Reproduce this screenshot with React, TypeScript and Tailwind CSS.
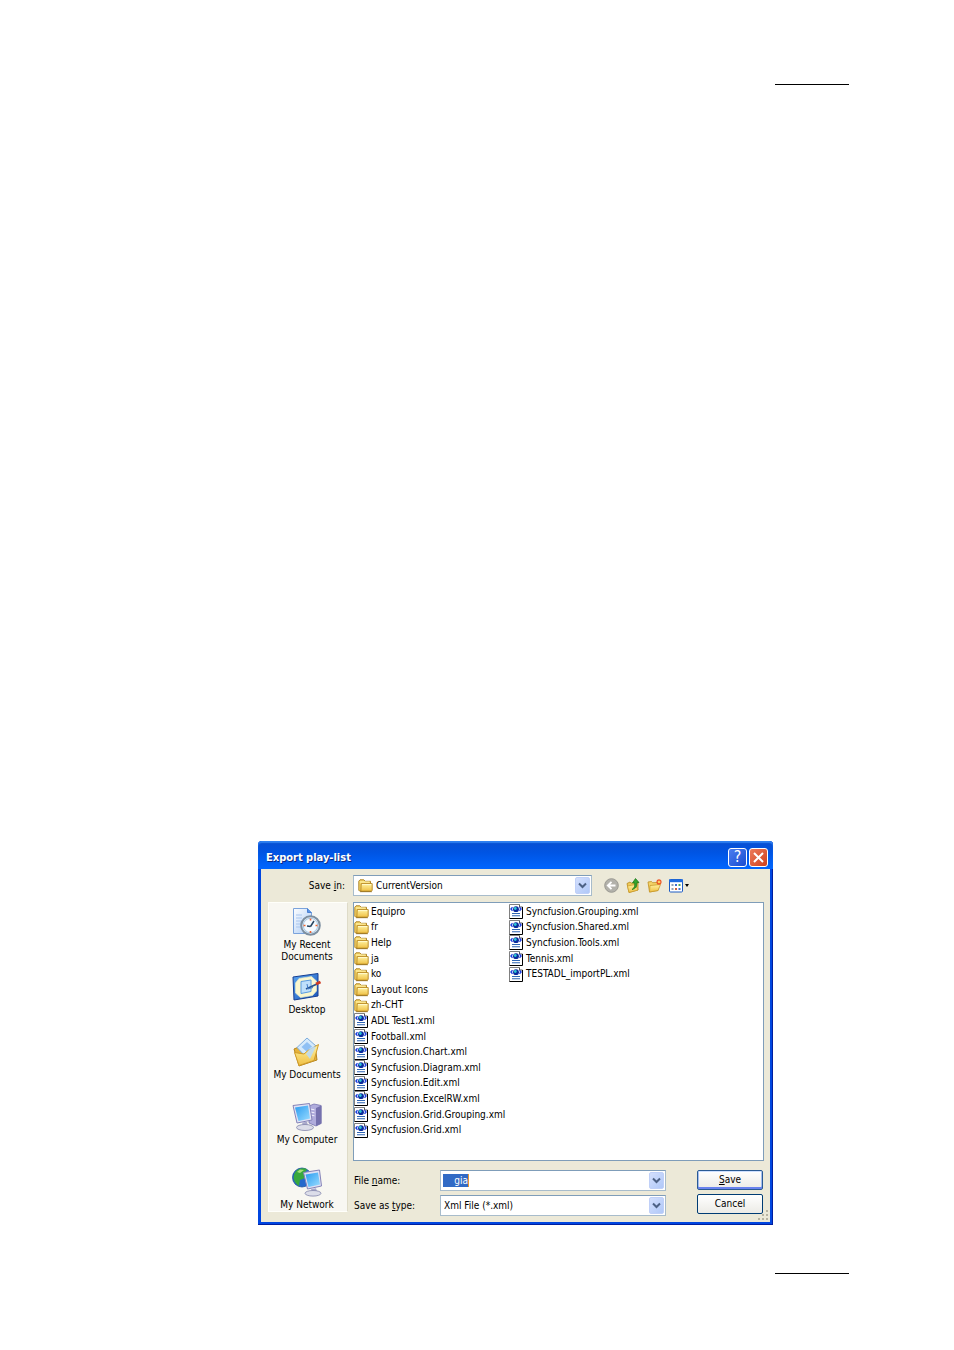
import type { ReactNode } from "react";

const FILES = [
  { name: "Equipro", type: "folder" },
  { name: "fr", type: "folder" },
  { name: "Help", type: "folder" },
  { name: "ja", type: "folder" },
  { name: "ko", type: "folder" },
  { name: "Layout Icons", type: "folder" },
  { name: "zh-CHT", type: "folder" },
  { name: "ADL Test1.xml", type: "xml" },
  { name: "Football.xml", type: "xml" },
  { name: "Syncfusion.Chart.xml", type: "xml" },
  { name: "Syncfusion.Diagram.xml", type: "xml" },
  { name: "Syncfusion.Edit.xml", type: "xml" },
  { name: "Syncfusion.ExcelRW.xml", type: "xml" },
  { name: "Syncfusion.Grid.Grouping.xml", type: "xml" },
  { name: "Syncfusion.Grid.xml", type: "xml" },
  { name: "Syncfusion.Grouping.xml", type: "xml" },
  { name: "Syncfusion.Shared.xml", type: "xml" },
  { name: "Syncfusion.Tools.xml", type: "xml" },
  { name: "Tennis.xml", type: "xml" },
  { name: "TESTADL_importPL.xml", type: "xml" },
];

const FolderIcon = () => (
  <svg width="15" height="15" viewBox="0 0 15 15" className="shrink-0">
    <path d="M.8 3.2 2 1.800h3.800L7.200 3.300h5.300V13H1.500l-.7-.8z" fill="#f6d768" stroke="#a87c1c" strokeWidth=".9" />
    <path d="M1.800 4h9.800" stroke="#fff3b0" />
    <path d="M3.200 5.600h11v6.600l-.8 1H2.800z" fill="url(#folder)" stroke="#b5851f" strokeWidth=".9" />
    <path d="M4 6.600h9.300" stroke="#fffbd0" />
    <path d="M2 13.700h12" stroke="#8a6614" strokeWidth=".7" />
  </svg>
);

const XmlIcon = () => (
  <svg width="15" height="15" viewBox="0 0 15 15" className="shrink-0">
    <path d="M.5.5h10l3 3v11H.5z" fill="#fff" />
    <path d="M.5 14.500V.5h10" fill="none" stroke="#808080" />
    <path d="M10.500.5v2.500h3" fill="none" stroke="#555" />
    <path d="M13.500 3v11.500H.5" fill="none" stroke="#000" />
    <path d="M3.500 3.200 1.900 5l1.600 1.800M10.500 3.200 12.100 5l-1.600 1.800" fill="none" stroke="#1a3ce0" strokeWidth="1.300" />
    <circle cx="7" cy="5.200" r="2.900" fill="#0a2a9c" />
    <circle cx="6.300" cy="4.500" r="1.400" fill="#2cc8d4" />
    <path d="M3 9.500h8M3 11.700h8" stroke="#2f66b4" strokeWidth="1.100" />
  </svg>
);

const RecentIcon = () => (
  <svg width="30" height="30" viewBox="0 0 30 30">
    <path d="M1.500 1.500h14l4 4v21h-18z" fill="url(#paper)" stroke="#7ba3dc" />
    <path d="M15.500 1.500v4h4" fill="#5b94e8" stroke="#4a80d0" />
    <path d="M4 8h6M4 11h6M4 14h6M4 17h5M4 20h5" stroke="#a9c6ee" />
    <circle cx="18.500" cy="18.500" r="9.300" fill="#e4eef6" stroke="#7d8fa0" strokeWidth="2" />
    <circle cx="18.500" cy="18.500" r="7.200" fill="#f5faff" stroke="#a4c6e4" />
    <path d="M18.500 19.500 22 14M18.500 19.500 15 19" stroke="#26435f" strokeWidth="1.500" />
    <path d="M18.500 11.500v2M18.500 24v2M11.500 18.500h2M23.500 18.500h2" stroke="#f0642d" strokeWidth="1.600" />
  </svg>
);

const DesktopIcon = () => (
  <svg width="30" height="30" viewBox="0 0 30 30">
    <path d="M1 5 26 1.500V24L2 28z" fill="url(#screen)" stroke="#173f92" />
    <path d="m7 6.500 12.500-2 5 4.500v10l-4 4.500-12 2L3.500 21V11z" fill="#fbf7cf" stroke="#dfe6c8" strokeWidth=".7" />
    <path d="m9 9.500 10-1.500v11.500L9 21.500z" fill="#bfe0fb" stroke="#5a9ce0" />
    <path d="m14 17 11-5" stroke="#28538e" strokeWidth="1.800" />
    <path d="m15 12 1 5 5-1.500" fill="none" stroke="#3f7cc8" />
    <path d="m24 12 4.500-2" stroke="#cf3a22" strokeWidth="3" />
  </svg>
);

const DocumentsIcon = () => (
  <svg width="30" height="30" viewBox="0 0 30 30">
    <path d="M2 12 8 9.500l3 2L23 8l2 15-18 6z" fill="#e6b23a" stroke="#b78620" />
    <path d="m5 10.500 10-9.500 9.500 8.500L16 22z" fill="#d5eafc" stroke="#7dadde" />
    <path d="m9.500 10 5.500-5 5 4.500-5.500 5z" fill="#8fc0f4" />
    <path d="M2.500 15.500 12 17l4-3.500 10.500-6-4.500 16L7 28.500z" fill="url(#folder)" stroke="#d09c2a" />
    <path d="m14 17 5-7 5-.5-6 12.500z" fill="#b9dafb" opacity=".85" />
  </svg>
);

const ComputerIcon = () => (
  <svg width="30" height="30" viewBox="0 0 30 30">
    <path d="m17 4 5-2 7 1.500v18L24 24l-7-3z" fill="#b0acdc" stroke="#7773b0" strokeWidth=".8" />
    <path d="m24 6 5.500-2.500v18L24 24z" fill="#7571ae" />
    <path d="m18.500 7 4 .8M18.500 10l4 .8M18.500 13l4 .8" stroke="#f0effc" />
    <path d="m1 3.500 16.500-2L20 18 5 21z" fill="#dfe1f4" stroke="#8583b8" />
    <path d="m3 5.500 13-2 2 13L6.500 19z" fill="url(#lcd)" />
    <path d="m10 20.500 5-.8 1 4.300h-5z" fill="#a9a9cb" />
    <ellipse cx="13" cy="25.500" rx="8.500" ry="3" fill="#dcdde9" stroke="#8385ac" strokeWidth=".8" />
  </svg>
);

const NetworkIcon = () => (
  <svg width="30" height="30" viewBox="0 0 30 30">
    <circle cx="10" cy="10.500" r="9.500" fill="#2468cc" stroke="#1d4f9d" strokeWidth=".8" />
    <path d="M4 4c4-3.500 9-3 11-1.500l-3 4.500 1 4-5 2-1 6C1 15 0 9 4 4z" fill="#38a83e" />
    <path d="m5 5 3-2.500 4 .5-4 3z" fill="#a4e078" />
    <path d="m11.500 5.500 16-2.500L29.500 19l-14 3z" fill="#dfe1f4" stroke="#8583b8" />
    <path d="m13.500 7.500 12.500-2L28 17.500 16.500 20z" fill="url(#lcd)" />
    <path d="m19 22 5-.8 1 3.300h-5z" fill="#a9a9cb" />
    <ellipse cx="21" cy="26.300" rx="8" ry="2.800" fill="#dcdde9" stroke="#8385ac" strokeWidth=".8" />
  </svg>
);

const PLACES = [
  { label: "My Recent Documents", icon: <RecentIcon /> },
  { label: "Desktop", icon: <DesktopIcon /> },
  { label: "My Documents", icon: <DocumentsIcon /> },
  { label: "My Computer", icon: <ComputerIcon /> },
  { label: "My Network", icon: <NetworkIcon /> },
];

// Gradients shared by all the icons
const Gradients = () => (
  <svg width="0" height="0" className="absolute" aria-hidden="true">
    <defs>
      <linearGradient id="folder" x1="0" y1="0" x2="0" y2="1">
        <stop offset="0" stopColor="#fff2a0" />
        <stop offset="1" stopColor="#efc045" />
      </linearGradient>
      <linearGradient id="paper" x1="0" y1="0" x2="1" y2="1">
        <stop offset="0" stopColor="#fdfeff" />
        <stop offset="1" stopColor="#a9caf5" />
      </linearGradient>
      <linearGradient id="screen" x1="0" y1="0" x2="1" y2="1">
        <stop offset="0" stopColor="#5aa4f0" />
        <stop offset="1" stopColor="#1b56ba" />
      </linearGradient>
      <linearGradient id="lcd" x1="0" y1="0" x2="1" y2="1">
        <stop offset="0" stopColor="#2a9cf0" />
        <stop offset="1" stopColor="#9adcff" />
      </linearGradient>
    </defs>
  </svg>
);

const Chevron = () => (
  <svg width="9" height="7" viewBox="0 0 9 7">
    <path d="m1 1.500 3.500 3.500L8 1.500" fill="none" stroke="#4d6185" strokeWidth="2" />
  </svg>
);

const ARROW_BOX =
  "flex w-[15px] items-center justify-center rounded-xs border border-[#c0d0f8] bg-linear-to-br from-[#d3dffd] to-[#b0c8f8]";

interface DropDownProps {
  id: string;
  value: string;
  icon?: ReactNode;
}

const DropDown = ({ id, value, icon }: DropDownProps) => (
  <div className="relative flex h-[21px] min-w-0 flex-1 items-center border border-[#a8bccb] border-t-[#7f9db9] bg-white">
    {icon && <span className="pl-1">{icon}</span>}
    <select
      id={id}
      className="h-full min-w-0 flex-1 appearance-none bg-transparent pl-[3px] outline-none"
    >
      <option>{value}</option>
    </select>
    <span className={`pointer-events-none absolute inset-y-px right-px ${ARROW_BOX}`}>
      <Chevron />
    </span>
  </div>
);

const TitleBar = () => (
  <header className="flex h-7 items-center justify-between rounded-t-sm bg-linear-to-b from-[#0a4fd0] via-[#0054e3] via-40% to-[#0066ff] pr-[5px] pl-2 shadow-[inset_0_2px_1px_#2f80f0]">
    <h1 className="pt-[5px] text-[11px] leading-4 font-bold text-white [text-shadow:1px_1px_#0a2a84]">
      Export play-list
    </h1>
    <div className="flex gap-[2px] pt-1">
      <button
        aria-label="Help"
        className="flex size-[19px] items-center justify-center rounded-[3px] border border-white bg-linear-to-br from-[#4a7df0] to-[#1a4bd0] text-[16px] leading-4 text-white"
      >
        ?
      </button>
      <button
        aria-label="Close"
        className="flex size-[19px] items-center justify-center rounded-[3px] border border-white bg-linear-to-br from-[#ec7a5a] to-[#d0401a]"
      >
        <svg width="11" height="11" viewBox="0 0 11 11">
          <path d="m1 1 9 9M10 1l-9 9" stroke="#fff" strokeWidth="2" />
        </svg>
      </button>
    </div>
  </header>
);

const Toolbar = () => (
  <div className="flex w-[172px] items-center pl-3">
    <button aria-label="Back" className="w-[22px]">
      <svg width="15" height="15" viewBox="0 0 15 15">
        <circle cx="7.500" cy="7.500" r="6.800" fill="#b2b1aa" stroke="#9a9992" />
        <path d="M11.500 7.500H4M7.500 3.800 3.800 7.500l3.700 3.700" fill="none" stroke="#fff" strokeWidth="1.800" />
      </svg>
    </button>
    <button aria-label="Up one level" className="w-[21px]">
      <svg width="14" height="15" viewBox="0 0 14 15">
        <path d="M1 5.500 4 4l1 1.200L12 4v8l-9 2.500z" fill="#eec95a" stroke="#b98a1c" strokeWidth=".8" />
        <path d="m1.500 8 8-1.500L12 12l-9 2.500z" fill="url(#folder)" stroke="#c99a2c" strokeWidth=".7" />
        <path d="M6 11.500C8.500 10 9 8 8.700 5H6.500l3-4.500L13 4.500l-2.200.3c.2 3.500-.8 6-4.800 6.700z" fill="#35a52f" stroke="#147414" strokeWidth=".7" />
      </svg>
    </button>
    <button aria-label="New folder" className="w-[22px]">
      <svg width="16" height="15" viewBox="0 0 16 15">
        <path d="M1 4 4.500 3.500l1 1.200L11 4.500v8L2.500 14z" fill="#f3d368" stroke="#c08f22" strokeWidth=".8" />
        <path d="m3 7.500 10.500-1-2.500 6-8.500 1.500z" fill="url(#folder)" stroke="#c99a2c" strokeWidth=".8" />
        <path d="M12 1v6M9 4h6M10 2l4 4M14 2l-4 4" stroke="#ee5524" strokeWidth="1.200" />
        <circle cx="12" cy="4" r="1.200" fill="#ffd35c" />
      </svg>
    </button>
    <button aria-label="View menu" className="flex items-center gap-[2px]">
      <svg width="14" height="14" viewBox="0 0 14 14">
        <rect x=".5" y=".5" width="13" height="12.500" rx="1" fill="#fff" stroke="#1d5cc4" />
        <path d="M0 1.800h14" stroke="#1d6be0" strokeWidth="2.800" />
        <path d="M2.500 6h2M2.500 10h2" stroke="#8ea0b4" strokeWidth="2" />
        <path d="M6 6h2M9.500 10h2" stroke="#3c6fd0" strokeWidth="2" />
        <path d="M9.500 6h2" stroke="#4ca852" strokeWidth="2" />
        <path d="M6 10h2" stroke="#d0603c" strokeWidth="2" />
      </svg>
      <svg width="4" height="3" viewBox="0 0 4 3">
        <path d="M0 0h4L2 3z" fill="#000" />
      </svg>
    </button>
  </div>
);

const Places = () => (
  <nav className="w-[80px] shrink-0 self-start border border-[#fffffa] border-r-[#dedbc8] bg-[#f8f7f2]">
    {PLACES.map((place) => (
      <a
        key={place.label}
        href="#"
        className="flex h-[65px] flex-col items-center gap-[2px] pt-1 pr-[2px] text-center leading-3 last:h-auto"
      >
        {place.icon}
        <span className={place.label === "My Recent Documents" ? "w-16" : "whitespace-nowrap"}>
          {place.label}
        </span>
      </a>
    ))}
  </nav>
);

const FileList = () => (
  <div className="h-[259px] border border-[#7f9db9] bg-white pt-px">
    <ul className="grid h-[234px] auto-cols-[155px] grid-flow-col grid-rows-[repeat(15,minmax(0,1fr))]">
      {FILES.map((file) => (
        <li key={file.name} className="flex items-center gap-[2px] whitespace-nowrap">
          {file.type === "folder" ? <FolderIcon /> : <XmlIcon />}
          {file.name}
        </li>
      ))}
    </ul>
  </div>
);

const FileForm = () => (
  <form className="flex gap-[31px] pt-[9px] pr-px" onSubmit={(e) => e.preventDefault()}>
    <div className="flex flex-1 flex-col gap-1">
      <div className="flex items-center">
        <label htmlFor="file-name" className="w-[87px] pl-px">
          File <u>n</u>ame:
        </label>
        <div className="flex h-[21px] min-w-0 flex-1 justify-between border border-[#a8bccb] border-t-[#7f9db9] bg-white p-px">
          <input
            id="file-name"
            defaultValue="gia"
            className="my-[2px] ml-px w-[26px] border-r border-[#e8962e] bg-[#316ac5] text-right text-white outline-none"
          />
          <button type="button" aria-label="Show names" className={ARROW_BOX}>
            <Chevron />
          </button>
        </div>
      </div>
      <div className="flex items-center">
        <label htmlFor="file-type" className="w-[87px] pl-px">
          Save as <u>t</u>ype:
        </label>
        <DropDown id="file-type" value="Xml File (*.xml)" />
      </div>
    </div>
    <div className="flex w-[66px] flex-col gap-1">
      <button className="h-5 rounded-xs border border-[#2a5a94] bg-linear-to-b from-white to-[#ecebe6] shadow-[inset_0_1px_#cee0ff,inset_0_-2px_#6982ee,inset_1px_0_#a3bdf0,inset_-1px_0_#a3bdf0]">
        <u>S</u>ave
      </button>
      <button
        type="button"
        className="h-5 rounded-xs border border-[#003c74] bg-linear-to-b from-white to-[#ecebe6]"
      >
        Cancel
      </button>
    </div>
  </form>
);

const SizeGrip = () => (
  <svg width="11" height="11" viewBox="0 0 11 11" className="absolute right-px bottom-px">
    <path
      d="M8 1h2M4 5h2M8 5h2M0 9h2M4 9h2M8 9h2"
      stroke="#b8b4a3"
      strokeWidth="2"
    />
  </svg>
);

const Dialog = () => (
  <section
    role="dialog"
    aria-label="Export play-list"
    className="rounded-t-sm bg-[#0046e0] text-[10px] leading-3 text-black shadow-[inset_-1px_-1px_#001ea0]"
  >
    <TitleBar />
    <div className="relative mx-[3px] bg-[#ece9d8] pt-[6px] pr-[6px] pb-[6px] pl-[7px]">
      <div className="flex items-center">
        <label htmlFor="save-in" className="w-[85px] pr-2 text-right">
          Save <u>i</u>n:
        </label>
        <DropDown id="save-in" value="CurrentVersion" icon={<FolderIcon />} />
        <Toolbar />
      </div>
      <div className="flex gap-[5px] pt-[6px]">
        <Places />
        <div className="min-w-0 flex-1">
          <FileList />
          <FileForm />
        </div>
      </div>
      <SizeGrip />
    </div>
    <div className="h-[3px]" />
  </section>
);

export default function App() {
  return (
    <main className="min-h-screen bg-white pt-[84px] font-['DejaVu_Sans_Condensed','DejaVu_Sans',sans-serif]">
      <Gradients />
      <hr className="mr-[105px] ml-auto w-[74px] border-black" />
      <div className="mt-[756px] mr-[181px] mb-12 ml-[258px]">
        <Dialog />
      </div>
      <hr className="mr-[105px] ml-auto w-[74px] border-black" />
    </main>
  );
}
